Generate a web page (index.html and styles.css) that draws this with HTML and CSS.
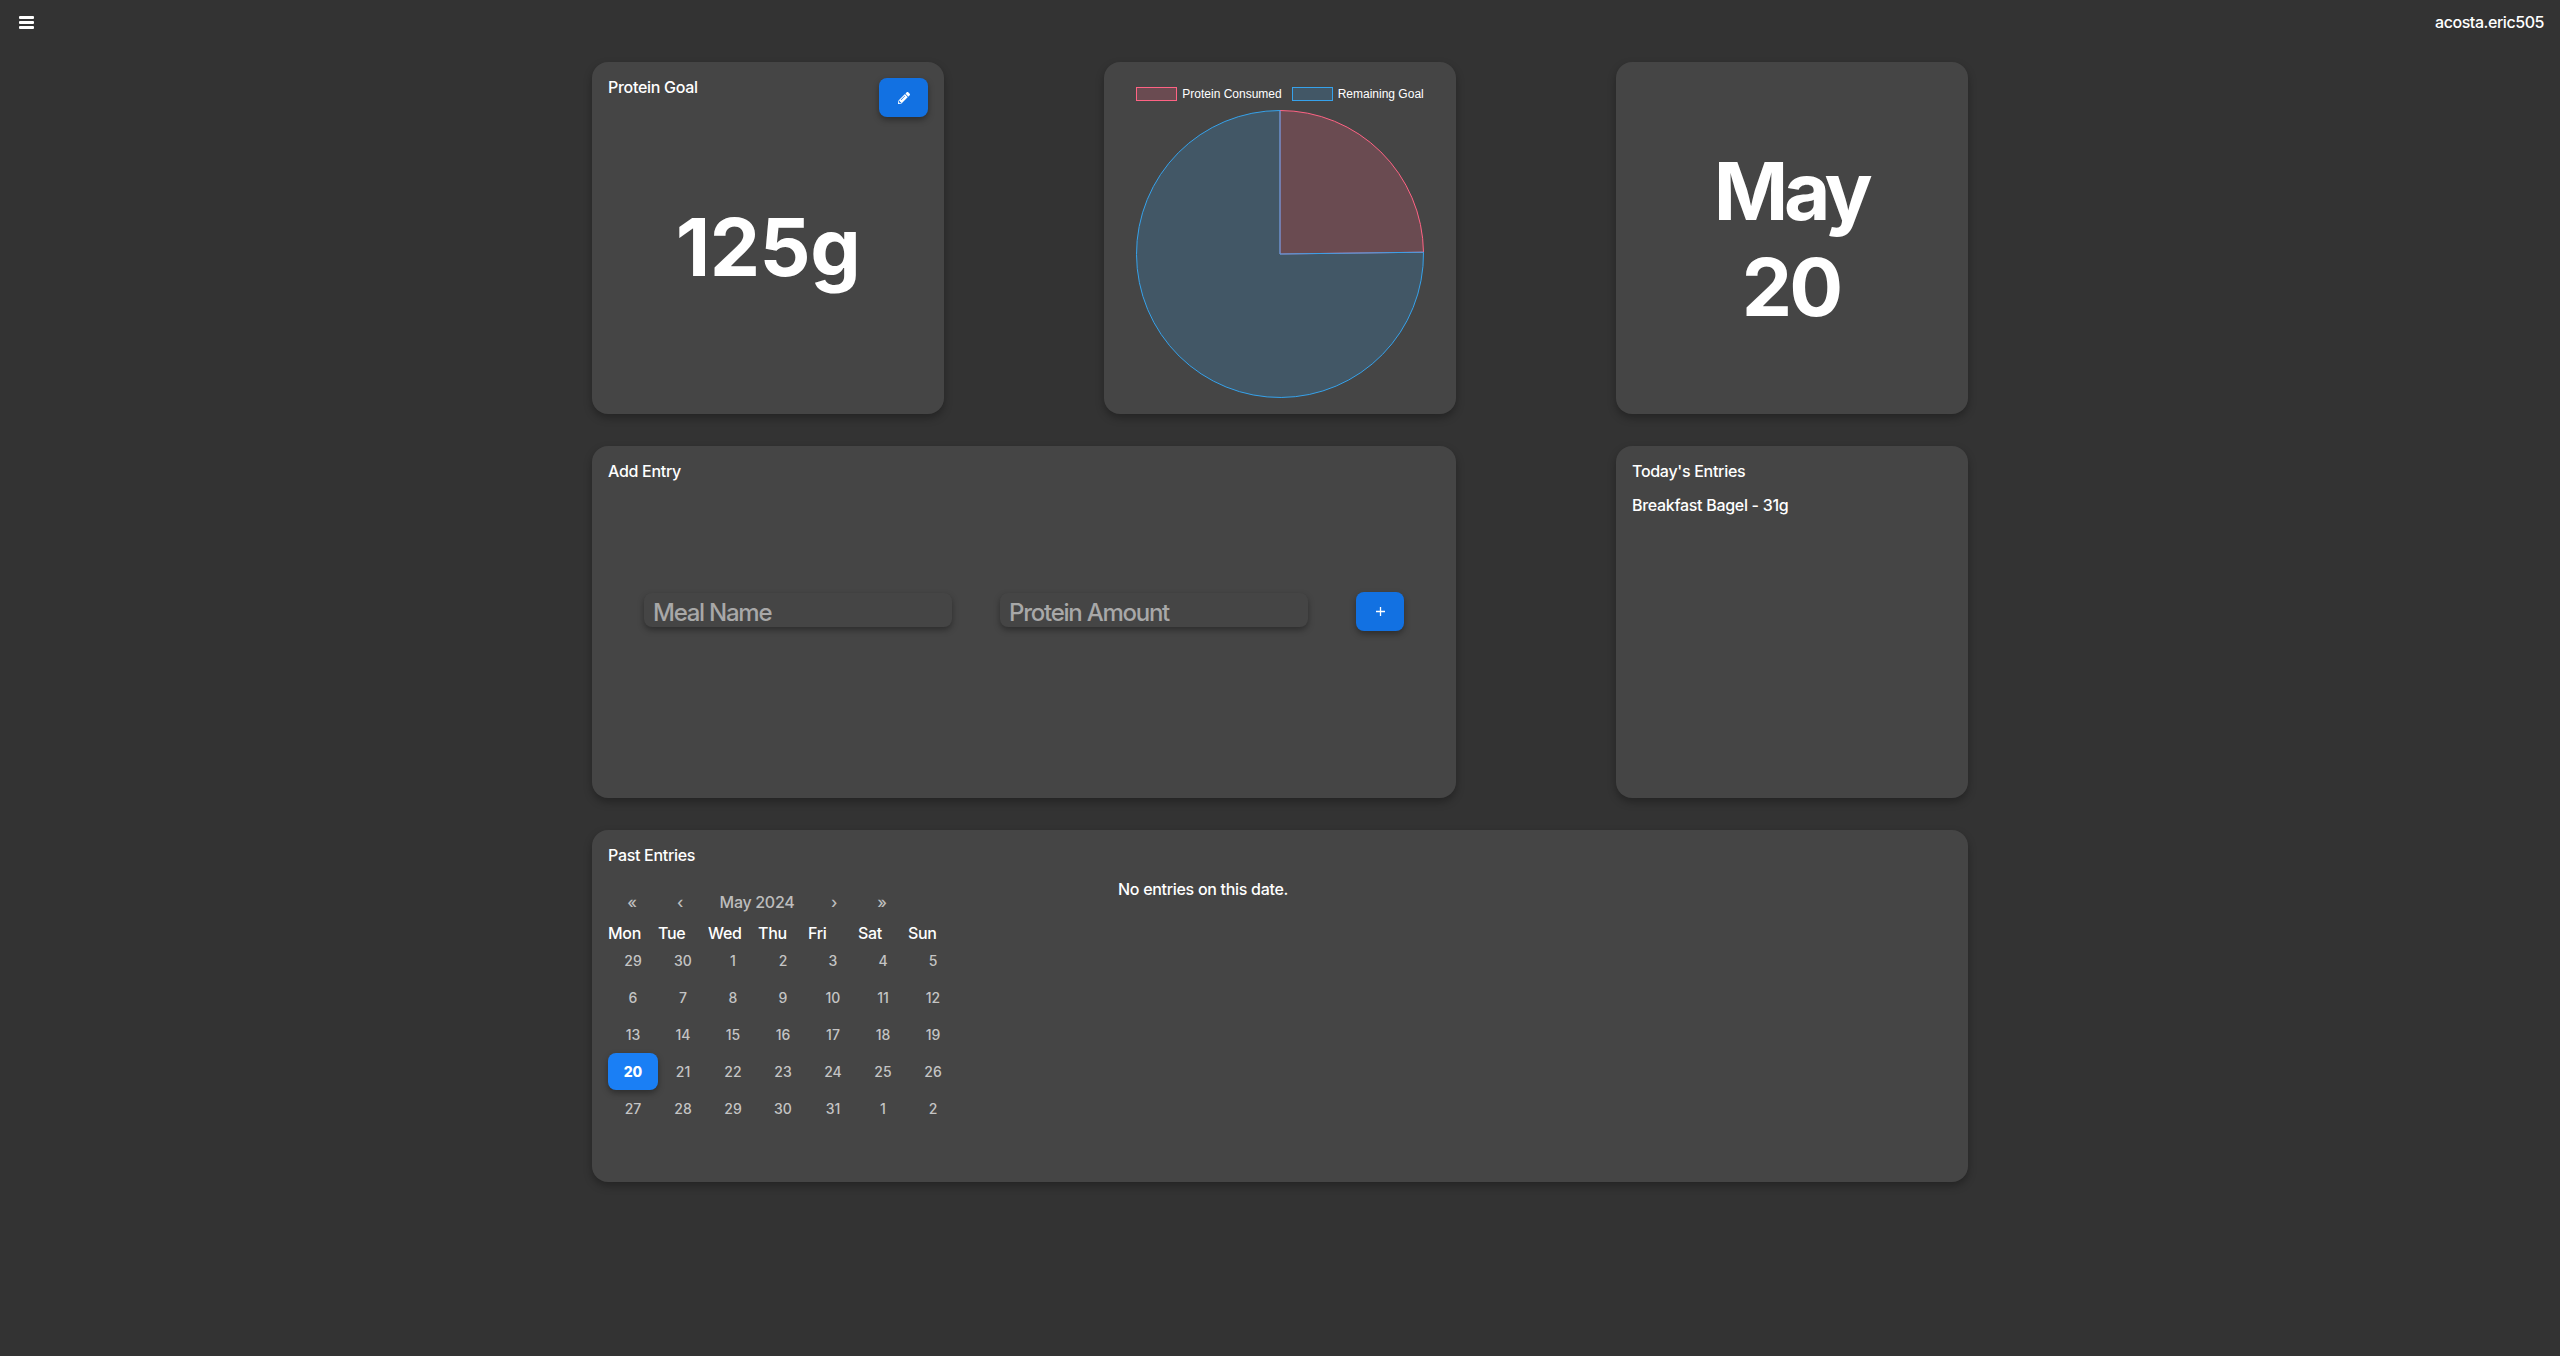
FILE: index.html
```html
<!DOCTYPE html>
<html lang="en">
<head>
<meta charset="utf-8">
<title>Protein Tracker</title>
<link rel="stylesheet" href="styles.css">
</head>
<body>
<header class="topbar">
  <button class="menu" aria-label="Menu"><span></span><span></span><span></span></button>
  <div class="user">acosta.eric505</div>
</header>
<main class="grid">
  <section class="card goal">
    <div class="card-head">
      <h2 class="title">Protein Goal</h2>
      <button class="btn btn-edit" aria-label="Edit">
        <svg class="pencil" viewBox="0 0 512 512"><path fill="#fff" d="M497.9 142.1l-46.1 46.1c-4.7 4.7-12.3 4.7-17 0l-111-111c-4.7-4.7-4.7-12.3 0-17l46.1-46.1c18.7-18.7 49.1-18.7 67.9 0l60.1 60.1c18.8 18.7 18.8 49.1 0 67.9zM284.2 99.8L21.6 362.4.4 483.9c-2.9 16.4 11.4 30.6 27.8 27.8l121.5-21.3 262.6-262.6c4.7-4.7 4.7-12.3 0-17l-111-111c-4.8-4.7-12.4-4.7-17.1 0zM124.1 339.9c-5.5-5.5-5.5-14.3 0-19.8l154-154c5.5-5.5 14.3-5.5 19.8 0s5.5 14.3 0 19.8l-154 154c-5.5 5.5-14.3 5.5-19.8 0zM88 424h48v36.3l-64.5 11.3-31.1-31.1L51.7 376H88v48z"/></svg>
      </button>
    </div>
    <div class="big goal-value">125g</div>
  </section>

  <section class="card chart">
    <div class="legend">
      <span class="swatch swatch-red"></span><span class="legend-label">Protein Consumed</span>
      <span class="swatch swatch-blue"></span><span class="legend-label">Remaining Goal</span>
    </div>
    <svg class="pie" viewBox="0 0 288 288" width="288" height="288">
      <path d="M144 144 L144 .5 A143.5 143.5 0 0 1 287.49 142.2 Z" fill="rgba(255,99,132,.2)" stroke="#ff6384" stroke-width="1"/>
      <path d="M144 144 L287.49 142.2 A143.5 143.5 0 1 1 144 .5 Z" fill="rgba(54,162,235,.2)" stroke="#36a2eb" stroke-width="1"/>
    </svg>
  </section>

  <section class="card date">
    <div class="big date-value"><span class="date-month">May</span><br><span class="date-day">20</span></div>
  </section>

  <section class="card entry">
    <h2 class="title">Add Entry</h2>
    <form class="entry-form">
      <input class="field" type="text" placeholder="Meal Name">
      <input class="field" type="text" placeholder="Protein Amount">
      <button class="btn btn-add" type="button" aria-label="Add">
        <svg class="plus" viewBox="0 0 9 9"><path d="M4.5 0v9M0 4.5h9" stroke="#fff" stroke-width="1.3" fill="none"/></svg>
      </button>
    </form>
  </section>

  <section class="card today">
    <h2 class="title">Today's Entries</h2>
    <p class="today-item">Breakfast Bagel - 31g</p>
  </section>

  <section class="card past">
    <h2 class="title">Past Entries</h2>
    <div class="past-body">
      <div class="calendar">
        <div class="cal-nav">
          <span>«</span><span>‹</span><span class="cal-month">May 2024</span><span>›</span><span>»</span>
        </div>
        <div class="cal-week">
          <span>Mon</span><span>Tue</span><span>Wed</span><span>Thu</span><span>Fri</span><span>Sat</span><span>Sun</span>
        </div>
        <div class="cal-days">
          <span>29</span><span>30</span><span>1</span><span>2</span><span>3</span><span>4</span><span>5</span>
          <span>6</span><span>7</span><span>8</span><span>9</span><span>10</span><span>11</span><span>12</span>
          <span>13</span><span>14</span><span>15</span><span>16</span><span>17</span><span>18</span><span>19</span>
          <span class="cal-active">20</span><span>21</span><span>22</span><span>23</span><span>24</span><span>25</span><span>26</span>
          <span>27</span><span>28</span><span>29</span><span>30</span><span>31</span><span>1</span><span>2</span>
        </div>
      </div>
      <p class="no-entries">No entries on this date.</p>
    </div>
  </section>
</main>
</body>
</html>
```
FILE: styles.css
```css
* { box-sizing: border-box; }
html, body { margin: 0; height: 100%; }
body {
  background: #333;
  color: #fff;
  font-family: Inter, "Liberation Sans", sans-serif;
  font-size: 16px;
  font-weight: 450;
  letter-spacing: -.3px;
  height: 1356px;
  overflow: hidden;
}
.topbar {
  display: flex;
  justify-content: space-between;
  align-items: flex-start;
  height: 62px;
  padding: 13px 16px 0 19px;
}
.menu {
  display: flex;
  flex-direction: column;
  gap: 2px;
  width: 15px;
  margin-top: 3px;
  padding: 0;
  border: 0;
  background: none;
}
.menu span { display: block; height: 3px; background: #fff; border-radius: 1px; }
.user { line-height: 19px; letter-spacing: -.45px; }
.grid {
  display: grid;
  grid-template-columns: repeat(3, 352px);
  grid-auto-rows: 352px;
  gap: 32px 160px;
  width: 1376px;
  margin: 0 auto;
}
.card {
  background: #454545;
  border-radius: 16px;
  padding: 16px;
  box-shadow: 0 4px 8px rgba(0, 0, 0, .3);
  display: flex;
  flex-direction: column;
  min-width: 0;
}
.title { margin: 0; font-size: 16px; font-weight: 450; line-height: 19px; }
.card-head { display: flex; justify-content: space-between; align-items: flex-start; }
.btn {
  display: flex;
  align-items: center;
  justify-content: center;
  border: 0;
  padding: 0;
  background: #1271e2;
  border-radius: 8px;
  box-shadow: 0 3px 6px rgba(0, 0, 0, .35);
}
.btn-edit { width: 49px; height: 39px; }
.pencil { width: 12px; height: 12px; }
.big { font-size: 80px; font-weight: 700; line-height: 96px; text-align: center; letter-spacing: 0; }
.goal-value { margin-top: 82px; letter-spacing: -.5px; }
.date { align-items: center; justify-content: center; }
.date-value { padding: 2px 2px 0 0; }
.date-month { letter-spacing: -4.5px; }
.date-day { letter-spacing: -3px; }
.chart { align-items: center; padding: 26px 16px 0; }
.legend {
  display: flex;
  align-items: center;
  font-family: "Liberation Sans", Arial, sans-serif;
  font-size: 12px;
  font-weight: 400;
  letter-spacing: 0;
  line-height: 12px;
  height: 12px;
}
.swatch { width: 41px; height: 14px; border: 1.5px solid; margin-right: 5px; }
.swatch-red { background: rgba(255, 99, 132, .2); border-color: #ff6384; }
.swatch-blue { background: rgba(54, 162, 235, .2); border-color: #36a2eb; margin-left: 10px; }
.pie { display: block; margin-top: 10px; flex: none; }
.entry { grid-column: span 2; }
.entry-form {
  display: flex;
  align-items: center;
  flex: 1;
  padding: 0 36px;
  gap: 48px;
  margin-top: -40px;
}
.field {
  width: 308px;
  height: 34px;
  margin-bottom: 3px;
  border: 0;
  border-radius: 8px;
  background: #454545;
  color: #fff;
  font: 450 24px/28px Inter, "Liberation Sans", sans-serif;
  letter-spacing: -1.25px;
  padding: 5px 9px 0;
  box-shadow: 0 3px 6px rgba(0, 0, 0, .35);
  outline: 0;
}
.field::placeholder { color: #a8a8a8; opacity: 1; }
.btn-add { width: 48px; height: 39px; }
.plus { width: 9px; height: 9px; }
.today-item { margin: 15px 0 0; line-height: 19px; }
.past { grid-column: 1 / -1; }
.past-body { display: flex; align-items: flex-start; margin-top: 15px; }
.calendar { width: 350px; flex: none; margin-top: 8px; }
.cal-nav {
  display: grid;
  grid-template-columns: 48px 48px 106px 48px 48px;
  height: 28px;
  align-items: center;
  text-align: center;
  color: #bdbdbd;
  line-height: 28px;
}
.cal-month { font-size: 16px; }
.cal-week {
  display: grid;
  grid-template-columns: repeat(7, 50px);
  height: 34px;
  align-items: center;
  line-height: 19px;
}
.cal-days {
  display: grid;
  grid-template-columns: repeat(7, 50px);
  grid-auto-rows: 37px;
  margin-top: -8px;
  font-size: 14px;
  letter-spacing: 0;
  color: #c4c4c4;
}
.cal-days span { display: flex; align-items: center; justify-content: center; }
.cal-active {
  background: #1a7ff5;
  color: #fff;
  font-weight: 800;
  border-radius: 8px;
  box-shadow: 0 3px 6px rgba(0, 0, 0, .35);
}
.no-entries {
  margin: 0;
  flex: 1;
  padding-left: 160px;
  line-height: 19px;
  font-size: 16px;
}
```
